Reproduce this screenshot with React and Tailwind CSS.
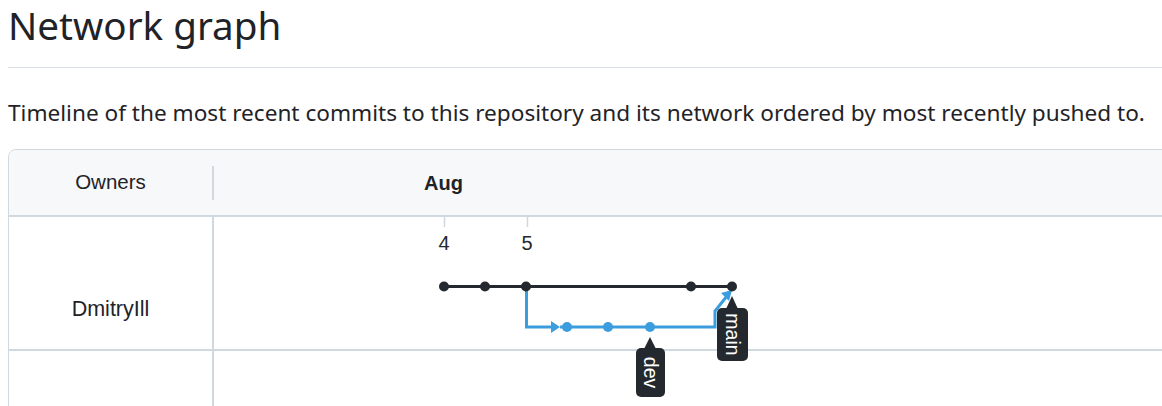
const ink = '#1f2328';

function Graph() {
  // viewBox uses page coordinates so positions read straight off the screenshot
  return (
    <svg
      className="absolute left-0 top-0"
      width="1154"
      height="190"
      viewBox="8 217 1154 190"
      fontFamily="'Liberation Sans', Arial, sans-serif"
    >
      <line x1="443.5" y1="217" x2="443.5" y2="227" stroke="#d0d7de" strokeWidth="1.5" />
      <line x1="526.5" y1="217" x2="526.5" y2="227" stroke="#d0d7de" strokeWidth="1.5" />
      <text x="443" y="250" fontSize="20" textAnchor="middle" fill="#24292f">4</text>
      <text x="526" y="250" fontSize="20" textAnchor="middle" fill="#24292f">5</text>

      {/* dev branch */}
      <path d="M525.5 287 V327 H552" fill="none" stroke="#3b9ddd" strokeWidth="3" />
      <polygon points="550,321 559,327 550,333" fill="#3b9ddd" />
      <path d="M559 327 H714 V311 L726 296" fill="none" stroke="#3b9ddd" strokeWidth="3" />
      <polygon points="720,293 731,290 728,301" fill="#3b9ddd" />
      {[566, 607, 649].map(x => (
        <circle key={x} cx={x} cy="327" r="5" fill="#3b9ddd" />
      ))}

      {/* main branch */}
      <line x1="443" y1="286.5" x2="731" y2="286.5" stroke="#24292f" strokeWidth="3" />
      {[443, 484, 525, 690, 731].map(x => (
        <circle key={x} cx={x} cy="286.5" r="5" fill="#24292f" />
      ))}

      {/* labels */}
      <polygon points="643,349 655,349 649,337" fill="#24292f" />
      <rect x="635" y="348" width="29" height="49" rx="5" fill="#24292f" />
      <text transform="translate(649.5 372.5) rotate(90)" fontSize="19.5" textAnchor="middle" dominantBaseline="central" fill="#fff">dev</text>

      <polygon points="725,309 737,309 731,296" fill="#24292f" />
      <rect x="716" y="308" width="31" height="53" rx="5" fill="#24292f" />
      <text transform="translate(731.5 334.5) rotate(90)" fontSize="19.5" textAnchor="middle" dominantBaseline="central" fill="#fff">main</text>
    </svg>
  );
}

export default function App() {
  return (
    <div className="w-[1162px] h-[406px] overflow-hidden bg-white pl-2" style={{ color: ink }}>
      <h1 className="font-['Noto_Sans',sans-serif] text-[38.6px] leading-[46px] font-normal pt-[2px] pb-[19px] border-b border-[#d8dee4]">
        Network graph
      </h1>
      <p className="font-['Noto_Sans',sans-serif] text-[22.6px] leading-[30px] mt-[30px] mb-[21px] whitespace-nowrap">
        Timeline of the most recent commits to this repository and its network ordered by most recently pushed to.
      </p>

      <div className="w-[1200px] rounded-tl-lg border border-[#d1d9e0] font-['Liberation_Sans',Arial,sans-serif]">
        <div className="flex h-[67px] items-center bg-[#f6f8fa] border-b-2 border-[#d1d9e0] rounded-tl-lg">
          <div className="w-[205px] h-[34px] flex items-center justify-center border-r-2 border-[#d1d9e0] text-[20.5px]">
            Owners
          </div>
          <div className="pl-[210px] text-[20px] font-bold">Aug</div>
        </div>

        <div className="relative">
          <div className="flex h-[134px] border-b-2 border-[#d1d9e0]">
            <div className="w-[205px] flex items-center justify-center pt-[52px] border-r-2 border-[#d1d9e0] text-[21.5px]">
              DmitryIll
            </div>
            <div className="flex-1" />
          </div>
          <div className="flex h-[80px]">
            <div className="w-[205px] border-r-2 border-[#d1d9e0]" />
            <div className="flex-1" />
          </div>
          <Graph />
        </div>
      </div>
    </div>
  );
}
